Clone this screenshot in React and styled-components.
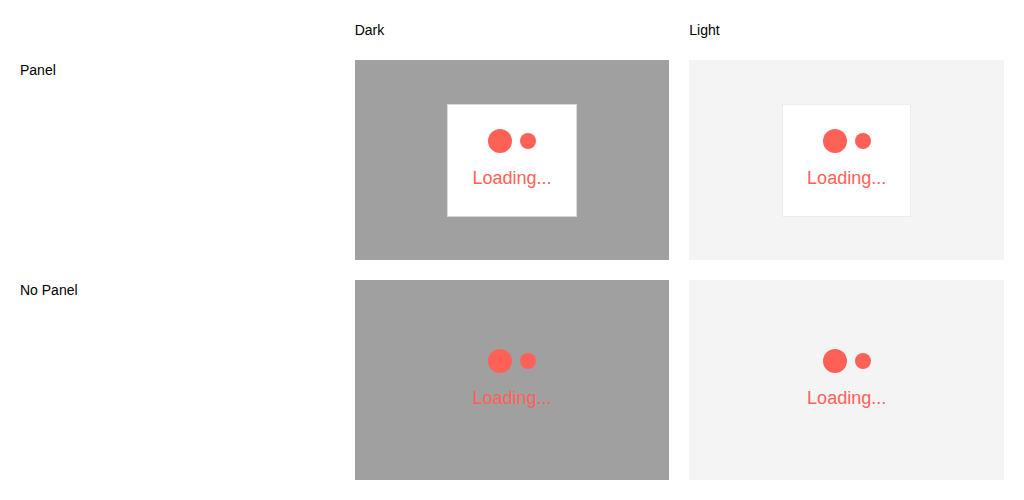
import React from 'react';
import styled, { createGlobalStyle } from 'styled-components';

const GlobalStyle = createGlobalStyle`
  body {
    margin: 0;
    background: #fff;
    font-family: "Liberation Sans", Arial, sans-serif;
    color: #000;
  }
`;

const Grid = styled.div`
  display: grid;
  grid-template-columns: repeat(3, 1fr);
  grid-template-rows: 20px 200px 200px;
  gap: 20px;
  padding: 20px;
`;

const Label = styled.div`
  font-size: 14px;
  line-height: 20px;
`;

const Stage = styled.div`
  display: flex;
  align-items: center;
  justify-content: center;
  background: ${p => (p.dark ? '#a0a0a0' : '#f4f4f4')};
`;

const Panel = styled.div`
  background: #fff;
  border: 1px solid ${p => (p.dark ? '#d9d9d9' : '#ececec')};
  padding: 24px;
`;

const Loader = styled.div`
  display: flex;
  flex-direction: column;
  align-items: center;
`;

const Dots = styled.div`
  display: flex;
  align-items: center;
  gap: 8px;
  height: 24px;
`;

const Dot = styled.span`
  width: ${p => p.size}px;
  height: ${p => p.size}px;
  border-radius: 50%;
  background: #ff6157;
`;

const Text = styled.div`
  margin-top: 12px;
  font-size: 18px;
  line-height: 27px;
  color: #ff6157;
`;

const Loading = () => (
  <Loader>
    <Dots>
      <Dot size={24} />
      <Dot size={16} />
    </Dots>
    <Text>Loading...</Text>
  </Loader>
);

export default function App() {
  return (
    <>
      <GlobalStyle />
      <Grid>
        <div />
        <Label>Dark</Label>
        <Label>Light</Label>

        <Label>Panel</Label>
        <Stage dark>
          <Panel dark>
            <Loading />
          </Panel>
        </Stage>
        <Stage>
          <Panel>
            <Loading />
          </Panel>
        </Stage>

        <Label>No Panel</Label>
        <Stage dark>
          <Loading />
        </Stage>
        <Stage>
          <Loading />
        </Stage>
      </Grid>
    </>
  );
}
